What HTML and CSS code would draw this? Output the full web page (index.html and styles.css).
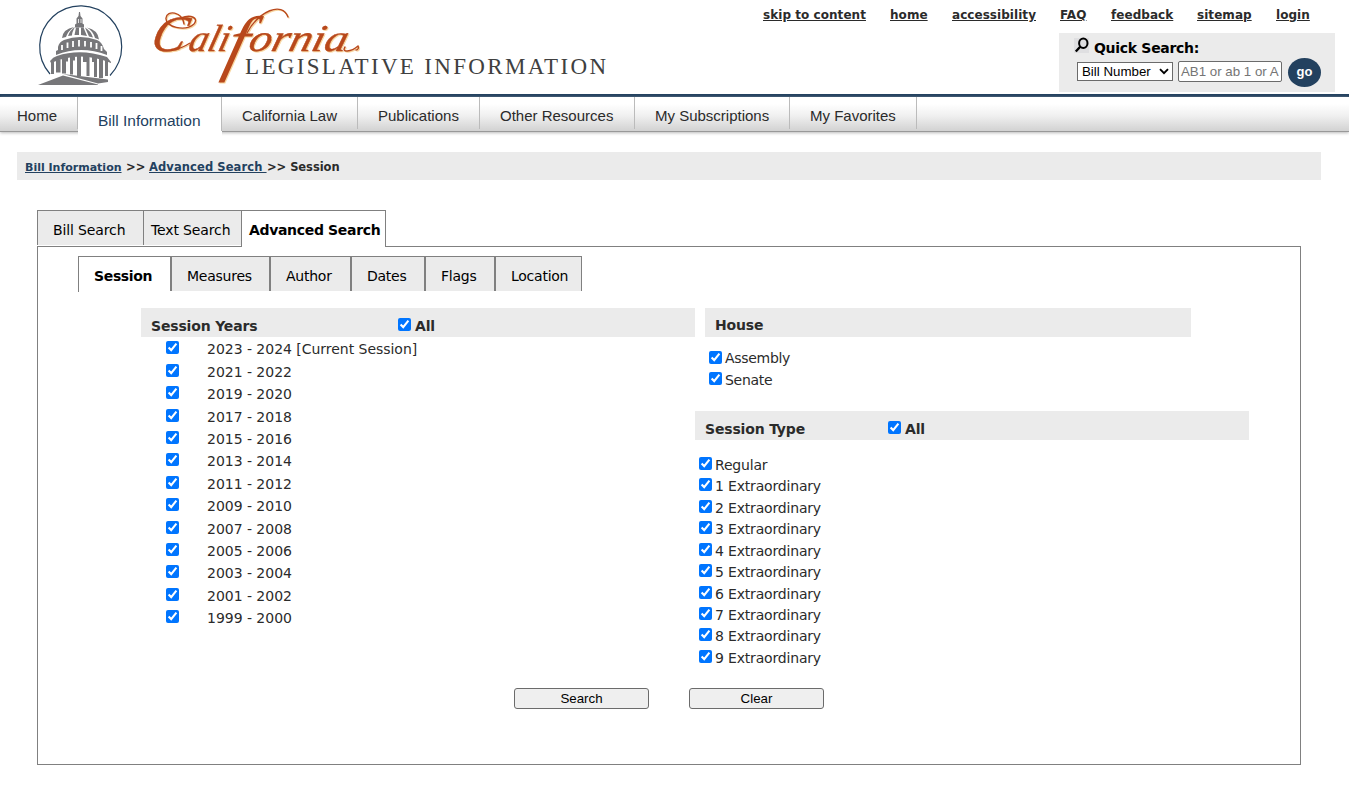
FILE: index.html
```html
<!DOCTYPE html>
<html lang="en">
<head>
<meta charset="utf-8">
<title>California Legislative Information</title>
<link rel="stylesheet" href="styles.css">
</head>
<body>
<header class="header">
  <svg class="logo" width="620" height="94" viewBox="0 0 620 94" role="img">
    <path d="M50 74A41 41 0 1 1 110 75.500" fill="none" stroke="#23415f" stroke-width="1.200"/>
    <g fill="#77777a">
      <path d="M38 85L63 75.500L98 84.500V85ZM63 74L108 79.500V82L98 83.500Z"/>
      <path d="M79 12h1l.5 4 2 2.500v5l1.500 1v3h-9v-3l1.500-1v-5l2-2.500z"/>
      <path d="M62 38Q63 29 74 27Q68 31 66 37zM68 36Q70 30 75 27Q72 32 72 35.500zM74.500 35L76 27.500h3V35zM81 35V27.500h2.500L87 36zM89 36.500L85 27.500Q91 31 93 37.500zM95 38Q93 31 87 27.500Q98 30 99 39.500z"/>
      <path d="M58 47Q59 42 64 40Q80 34 97 40Q102 42 104 49L107 52V55Q81 45 56 55V51L58 50Z"/>
      <path d="M50 61Q53 57 57 56Q80 48 107 57L111 62V63Q80 50 51 63Z"/>
      <path d="M51 62h3v12H51zM56 59.500h4.500v13H56zM62 57.500h6v4h-2v12h-4zM70 56.500h5v4h-2v14h-3zM77 56h4v20h-4zM83 56h6.500v20h-3V62H83zM92 57h5v20h-3V62h-2zM99 59h4v19h-4zM105 60h3v16h-3z"/>
    </g>
    <g fill="none" stroke="#fff" stroke-width="1.800"><path d="M62 50v-5M67.500 48v-5.500M73 47v-6M79 46.500V40M85 46.500V41M91 47.500V42M96.500 49v-6M101.500 51v-5"/></g>
    <path d="M78.500 19v4M81 19v4" fill="none" stroke="#fff" stroke-width=".8"/>
    <g class="swash">
      <text class="script" transform="translate(13.700 0) skewX(-15)"><tspan class="script-cap" x="149" y="51.500">C</tspan><tspan x="187" y="51">ali</tspan><tspan class="script-f" x="226" y="67">f</tspan><tspan x="247" y="51" textLength="98" lengthAdjust="spacingAndGlyphs">ornia</tspan></text>
      <path d="M184 24C182 11 167 10 166 18C165 27 185 32 194 24C199 18 191 14 181 18M345 47C341 53 351 52 358 46C359 48 358 50 356 50M247 33C259 11 282 1 288 17" fill="none" stroke="#b8481b" stroke-width="1.400" stroke-linecap="round"/>
      <path d="M172 50Q181 49 190 43" fill="none" stroke="#b8481b" stroke-width="1.200"/>
    </g>
    <text class="wordmark" x="245" y="74" textLength="361">LEGISLATIVE INFORMATION</text>
  </svg>
  <div class="tools">
    <nav class="links">
      <a class="w-skip">skip to content</a><a class="w-home">home</a><a class="w-acc">accessibility</a><a class="w-faq">FAQ</a><a class="w-feed">feedback</a><a class="w-site">sitemap</a><a class="w-login">login</a>
    </nav>
    <form class="quick">
      <div class="quick-title">
        <svg width="16" height="17" viewBox="0 0 16 17"><path fill="#dfdfe1" d="M0 1h15v15H0z"/><ellipse cx="9.300" cy="6.300" rx="4.200" ry="4.700" fill="none" stroke="#000" stroke-width="2"/><path d="M6.200 9.800L1.800 14.500" stroke="#000" stroke-width="2.400"/></svg>
        <span>Quick Search:</span>
      </div>
      <div class="quick-row">
        <div class="select"><span>Bill Number</span><svg width="10" height="7" viewBox="0 0 10 7"><path d="M1 1.200L5 5.200L9 1.200" fill="none" stroke="#000" stroke-width="1.900"/></svg></div>
        <div class="query">AB1 or ab 1 or A</div>
        <div class="go">go</div>
      </div>
    </form>
  </div>
</header>
<nav class="mainnav">
  <a class="n-home">Home</a><a class="n-bill">Bill Information</a><a class="n-law">California Law</a><a class="n-pub">Publications</a><a class="n-other">Other Resources</a><a class="n-sub">My Subscriptions</a><a class="n-fav">My Favorites</a>
</nav>
<div class="crumbs"><a class="c-bill">Bill Information</a><span class="c-sep">&gt;&gt;</span><a class="c-adv">Advanced Search&nbsp;</a><span class="c-here">&gt;&gt; Session</span></div>
<div class="tabs"><a class="t-bill">Bill Search</a><a class="t-text">Text Search</a><a class="t-adv">Advanced Search</a></div>
<main class="panel">
  <div class="subtabs"><a class="s-ses">Session</a><a class="s-mea">Measures</a><a class="s-aut">Author</a><a class="s-dat">Dates</a><a class="s-fla">Flags</a><a class="s-loc">Location</a></div>
  <div class="columns">
    <section class="years">
      <h2 class="bar bar-years"><span class="bar-title">Session Years</span><input type="checkbox" checked><span>All</span></h2>
      <ul>
        <li><input type="checkbox" checked>2023 - 2024 [Current Session]</li>
        <li><input type="checkbox" checked>2021 - 2022</li>
        <li><input type="checkbox" checked>2019 - 2020</li>
        <li><input type="checkbox" checked>2017 - 2018</li>
        <li><input type="checkbox" checked>2015 - 2016</li>
        <li><input type="checkbox" checked>2013 - 2014</li>
        <li><input type="checkbox" checked>2011 - 2012</li>
        <li><input type="checkbox" checked>2009 - 2010</li>
        <li><input type="checkbox" checked>2007 - 2008</li>
        <li><input type="checkbox" checked>2005 - 2006</li>
        <li><input type="checkbox" checked>2003 - 2004</li>
        <li><input type="checkbox" checked>2001 - 2002</li>
        <li><input type="checkbox" checked>1999 - 2000</li>
      </ul>
    </section>
    <div class="right">
      <section class="house">
        <h2 class="bar bar-house"><span>House</span></h2>
        <ul>
          <li><input type="checkbox" checked>Assembly</li>
          <li><input type="checkbox" checked>Senate</li>
        </ul>
      </section>
      <section class="types">
        <h2 class="bar"><span class="bar-title type-title">Session Type</span><input type="checkbox" checked><span>All</span></h2>
        <ul>
          <li><input type="checkbox" checked>Regular</li>
          <li><input type="checkbox" checked>1 Extraordinary</li>
          <li><input type="checkbox" checked>2 Extraordinary</li>
          <li><input type="checkbox" checked>3 Extraordinary</li>
          <li><input type="checkbox" checked>4 Extraordinary</li>
          <li><input type="checkbox" checked>5 Extraordinary</li>
          <li><input type="checkbox" checked>6 Extraordinary</li>
          <li><input type="checkbox" checked>7 Extraordinary</li>
          <li><input type="checkbox" checked>8 Extraordinary</li>
          <li><input type="checkbox" checked>9 Extraordinary</li>
        </ul>
      </section>
    </div>
  </div>
  <div class="actions"><button>Search</button><button>Clear</button></div>
</main>
</body>
</html>
```
FILE: styles.css
```css
* { box-sizing: border-box; }
body { margin: 0; width: 1349px; height: 789px; overflow: hidden; background: #fff; color: #2b2b2b; font-family: "DejaVu Sans", sans-serif; font-size: 14px; }
ul { list-style: none; margin: 0; padding: 0; }
a { white-space: nowrap; }
input { margin: 0; width: 13px; height: 13px; flex: none; accent-color: #0075ff; }

.header { display: flex; justify-content: space-between; height: 97px; border-bottom: 3px solid #23415f; }
.logo { display: block; flex: none; }
.swash { filter: drop-shadow(1px 1px 0 #f8d6a0); }
.script { font-family: "Liberation Serif", serif; font-style: italic; font-size: 38px; fill: #b8481b; stroke: #b8481b; stroke-width: .4px; }
.script-cap { font-size: 51px; }
.script-f { font-size: 73px; stroke: none; }
.wordmark { font-family: "Liberation Serif", serif; font-size: 23px; fill: #404040; }

.tools { width: 586px; }
.links { display: flex; height: 33px; padding-top: 7px; line-height: 16px; font-size: 12px; font-weight: bold; letter-spacing: .05px; }
.links a { text-decoration: underline; flex: none; }
.w-skip { width: 127px; }
.w-home { width: 62px; }
.w-acc { width: 108px; }
.w-faq { width: 51px; }
.w-feed { width: 86px; }
.w-site { width: 79px; }
.quick { width: 276px; height: 59px; margin-left: 296px; padding: 3px 0 0 15px; background: #ebebeb; }
.quick-title { display: flex; gap: 4px; height: 20px; color: #000; font-size: 14px; font-weight: bold; line-height: 24px; letter-spacing: -.3px; }
.quick-title svg { margin-top: 1px; }
.quick-row { display: flex; align-items: flex-start; padding: 2px 0 0 3px; }
.select { display: flex; align-items: center; justify-content: space-between; width: 96px; height: 19px; margin-top: 4px; padding: 0 3px 0 4px; border: 1px solid #6b6b6b; background: #fff; color: #000; font: 13.3px "Liberation Sans", sans-serif; }
.query { width: 104px; height: 21px; margin: 3px 0 0 5px; padding: 0 2px; border: 1px solid #6b6b6b; border-radius: 2px; background: #fff; color: #757575; font: 13.3px/19px "Liberation Sans", sans-serif; white-space: nowrap; }
.go { width: 33px; height: 29px; margin-left: 6px; border-radius: 50%; background: #23415f; color: #fff; font: bold 13px/28px "Liberation Sans", sans-serif; text-align: center; }

.mainnav { display: flex; height: 35px; border-bottom: 1px solid #999; background: linear-gradient(#fff 20%, #f0f0f0 55%, #d2d2d2); box-shadow: 0 1px 3px #bbb; color: #2b2b2b; font: 15px/38px "Liberation Sans", sans-serif; }
.mainnav a { height: 32px; padding-left: 20px; border-right: 1px solid #bbb; }
.mainnav .n-home { width: 78px; padding-left: 17px; }
.mainnav .n-bill { width: 144px; height: 40px; padding-right: 1px; border-right: 0; line-height: 47px; background: linear-gradient(#bbb, #bbb) right top / 1px 34px no-repeat #fff; color: #23415f; font-size: 15.500px; }
.n-law { width: 136px; }
.n-pub { width: 122px; }
.n-other { width: 155px; }
.n-sub { width: 155px; }
.n-fav { width: 127px; }

.crumbs { display: flex; width: 1304px; height: 28px; margin: 20px 0 0 17px; padding-left: 8px; background: #ebebeb; font-size: 11.500px; font-weight: bold; line-height: 30px; white-space: nowrap; }
.crumbs a { color: #23415f; text-decoration: underline; flex: none; }
.crumbs .c-bill { width: 101px; font-size: 11px; line-height: 31px; }
.c-sep { width: 23px; }
.c-adv { width: 118px; letter-spacing: .1px; }
.c-here { letter-spacing: -.05px; }

.tabs { display: flex; width: 1312px; height: 36px; margin: 30px 0 0 37px; color: #000; line-height: 38px; letter-spacing: -.13px; }
.tabs a { height: 35px; border: 1px solid #808080; border-width: 1px 0 0 1px; background: #ebebeb; }
.tabs .t-bill { width: 106px; padding-left: 15px; }
.tabs .t-text { width: 98px; padding-left: 7px; }
.tabs .t-adv { position: relative; width: 145px; height: 37px; padding-left: 7px; border-right-width: 1px; background: #fff; font-weight: bold; letter-spacing: -.33px; }
.panel { width: 1264px; height: 519px; margin-left: 37px; padding: 9px 0 0 40px; border: 1px solid #808080; }
.subtabs { display: flex; height: 36px; color: #000; line-height: 38px; letter-spacing: -.25px; }
.subtabs a { height: 35px; padding-left: 15px; border: 1px solid #808080; border-width: 1px 0 0 2px; background: #ebebeb; }
.subtabs .s-ses { width: 92px; height: 36px; border-left-width: 1px; background: #fff; font-weight: bold; letter-spacing: -.35px; }
.s-mea { width: 99px; }
.s-aut { width: 81px; }
.s-dat { width: 74px; }
.s-fla { width: 70px; }
.subtabs .s-loc { width: 88px; border-right-width: 1px; }

.columns { display: flex; height: 364px; margin: 16px 0 0 63px; }
.years { width: 554px; }
.bar { display: flex; align-items: center; height: 29px; margin: 0; padding: 6px 0 0 10px; background: #ebebeb; font-size: 14px; font-weight: bold; line-height: 28px; letter-spacing: -.17px; }
.bar input { margin: 0 4px 2px 0; }
.bar-title { width: 247px; }
.type-title { width: 183px; }
.years li { display: flex; height: 22.42px; padding: .3px 0 0 25px; line-height: 24px; letter-spacing: -.03px; }
.years li input { margin: 4px 28px 0 0; }
.right { width: 554px; }
.house { height: 103px; padding-left: 10px; }
.bar-house { width: 486px; margin-bottom: 11px; padding-top: 4px; }
.house li { display: flex; height: 21.500px; padding-left: 4px; line-height: 21.500px; letter-spacing: -.3px; }
.house input, .types li input { margin: 3px 3px 0 0; }
.house li + li input { margin-top: 2.500px; }
.types ul { padding-top: 14px; }
.types li { display: flex; height: 21.430px; padding-left: 4px; line-height: 22px; letter-spacing: -.18px; }
.actions { display: flex; gap: 40px; margin: 16px 0 0 436px; }
.actions button { width: 135px; height: 21px; padding: 0; border: 1px solid #6b6b6b; border-radius: 3px; background: #efefef; color: #000; font: 13.3px "Liberation Sans", sans-serif; }
```
